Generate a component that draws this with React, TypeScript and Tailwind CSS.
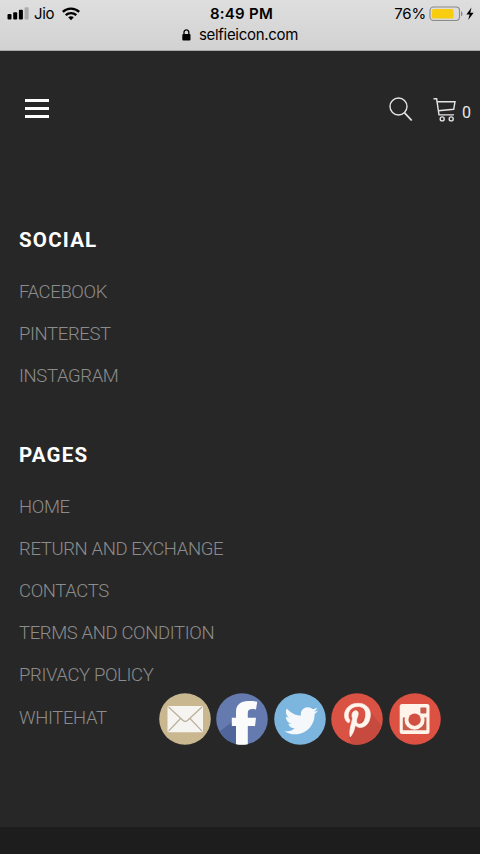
import React from "react";
import { FaPinterestP, FaTwitter } from "react-icons/fa";

const socialLinks = ["FACEBOOK", "PINTEREST", "INSTAGRAM"];
const pageLinks = ["HOME", "RETURN AND EXCHANGE", "CONTACTS", "TERMS AND CONDITION", "PRIVACY POLICY", "WHITEHAT"];

function StatusBar() {
  return (
    <header className="h-[51px] shrink-0 border-b border-[#aaa] bg-linear-to-b from-[#dedede] to-[#d2d2d2] font-['Inter','Liberation_Sans',sans-serif] text-black">
      <div className="grid h-[27px] grid-cols-3 items-center pl-[7px] pr-[5px]">
        {/* Signal */}
        <div className="flex items-center">
          <svg width="22" height="13" viewBox="0 0 22 13">
            <rect x="0.5" y="7" width="4" height="5.5" rx="1" />
            <rect x="6.2" y="5.2" width="4" height="7.3" rx="1" />
            <rect x="11.9" y="2.8" width="4" height="9.7" rx="1" />
            <rect x="17.6" y="0.2" width="4" height="12.3" rx="1" fill="#acacac" />
          </svg>
          <span className="ml-[5px] w-[21px] text-[15px] leading-[21px] tracking-[-0.3px]">Jio</span>
          <svg className="ml-[7px]" width="18" height="14" viewBox="0 0 18 14" fill="none" stroke="black" strokeWidth="2.3">
            <path d="M0.8 4.9C5.3 0.4 12.7 0.4 17.2 4.9" />
            <path d="M3.7 8.2C6.7 5.4 11.3 5.4 14.3 8.2" />
            <path d="M6.2 10.3C7.8 8.9 10.2 8.9 11.8 10.3L9 13.2Z" fill="black" stroke="none" />
          </svg>
        </div>
        <span className="pl-px text-center text-[15px] font-semibold leading-[21px] tracking-[0.25px]">8:49 PM</span>
        {/* Battery */}
        <div className="flex items-center justify-end">
          <span className="text-[15px] leading-[21px] tracking-[-0.2px]">76%</span>
          <svg className="ml-[3px]" width="46" height="16" viewBox="0 0 46 16">
            <rect x="1" y="1" width="29.5" height="13.5" rx="3.5" fill="none" stroke="#8a8a8a" strokeWidth="1.1" />
            <rect x="3" y="3" width="21.5" height="9.5" rx="1.6" fill="#f8cd10" />
            <path d="M32 5.2C34 5.8 34 9.7 32 10.3Z" fill="#8a8a8a" />
            <path d="M42.5 1.6L37.4 8.5H40.6L39.2 13.9L44.6 6.7H41.3Z" />
          </svg>
        </div>
      </div>
      <div className="flex h-[16px] items-center justify-center">
        <svg className="mr-2" width="9" height="12" viewBox="0 0 9 12">
          <rect x="0.3" y="5" width="8.2" height="6.4" rx="1" />
          <path d="M2 5.5V3.2C2 0.2 6.8 0.2 6.8 3.2V5.5" fill="none" stroke="black" strokeWidth="1.3" />
        </svg>
        <span className="text-[15px] leading-4 tracking-[-0.3px]">selfieicon.com</span>
      </div>
    </header>
  );
}

function NavBar() {
  return (
    <nav className="flex h-[60px] items-center justify-between pl-[25px] pr-[9px]">
      <button className="mb-px flex flex-col gap-[5px]" aria-label="Menu">
        <span className="h-[3px] w-6 bg-white" />
        <span className="h-[3px] w-6 bg-white" />
        <span className="h-[3px] w-6 bg-white" />
      </button>
      <div className="flex items-center">
        <svg width="24" height="26" viewBox="0 0 24 26" fill="none" stroke="#e4e4e4" strokeWidth="1.4">
          <circle cx="9.5" cy="10.5" r="8.5" />
          <path d="M15.6 16.8L22.7 24.5" strokeWidth="1.8" />
        </svg>
        <svg className="ml-5" width="24" height="26" viewBox="0 0 24 26" fill="none" stroke="#e4e4e4" strokeWidth="1.4">
          <path d="M0.5 2.8H3.6L6 18.9H21" />
          <path d="M4.1 5.7H22L20.7 13.3L5.2 14.8" />
          <circle cx="9.2" cy="22.9" r="2" />
          <circle cx="18.2" cy="22.9" r="2" />
        </svg>
        <span className="ml-[5px] w-[9px] pt-[7px] text-[16px] leading-5 text-[#e8e8e8]">0</span>
      </div>
    </nav>
  );
}

function LinkSection({ title, links }: { title: string; links: string[] }) {
  return (
    <section>
      <h2 className="text-[20.5px] font-bold leading-6 tracking-[1.2px] text-white">{title}</h2>
      <ul className="mt-[19px]">
        {links.map((link) => (
          <li key={link} className="h-[42.2px] text-[18.5px] font-light leading-[42.2px] tracking-[-0.37px] text-[#8c8c8c]">
            {link}
          </li>
        ))}
      </ul>
    </section>
  );
}

function ShareIcons() {
  return (
    <div className="absolute left-[158.5px] top-[693px] flex gap-[5.6px]">
      {/* Mail */}
      <svg width="52" height="52" viewBox="0 0 52 52">
        <circle cx="26" cy="26" r="25.8" fill="#c8b78f" />
        <rect x="8.5" y="13" width="35.5" height="26.2" rx="1.5" fill="#f5f4f1" />
        <path d="M9.5 14L23.8 27.3Q26.2 29.5 28.7 27.3L43 14M9.5 38.2L21.5 25.5M43 38.2L31 25.5" fill="none" stroke="#b9ae98" strokeWidth="1.2" />
      </svg>
      {/* Facebook */}
      <svg width="52" height="52" viewBox="0 0 52 52">
        <circle cx="26" cy="26" r="25.8" fill="#657bb0" />
        <path d="M16 29L3.5 38.5A25.8 25.8 0 0 0 20 51V33Z" fill="#50669b" />
        <path d="M20 51.2V33H15.8V24.7H20V19C20 11.5 25 8 32 8C36.5 8 39 8 41.2 8.8L40 16.5C34 15.4 31.8 16.6 31.8 20V24.7H40L39 33H31.8V51.2Q26 52.5 20 51.2Z" fill="#fbfbfc" />
      </svg>
      {/* Twitter */}
      <svg width="52" height="52" viewBox="0 0 52 52">
        <circle cx="26" cy="26" r="25.8" fill="#7cb6df" />
        <FaTwitter x="10.5" y="11" size={33.5} color="#f4f8fb" />
      </svg>
      {/* Pinterest */}
      <svg width="52" height="52" viewBox="0 0 52 52">
        <circle cx="26" cy="26" r="25.8" fill="#d95243" />
        <path d="M39 18L50.2 32.5A25.8 25.8 0 0 1 20.5 51.2L17.5 43.5Z" fill="#c64a3d" />
        <FaPinterestP x="9.2" y="9.7" size={34.5} color="#fff5ef" stroke="#fff5ef" strokeWidth="10" />
      </svg>
      {/* Instagram */}
      <svg width="52" height="52" viewBox="0 0 52 52">
        <circle cx="26" cy="26" r="25.8" fill="#dc5142" />
        <rect x="10.7" y="11" width="29.8" height="30" rx="2.5" fill="#fff3ea" />
        <path d="M13.8 24.5H17C15.2 32 20.5 35.2 25.6 35.2S36 32 34.2 24.5H37.4V37.3H13.8Z" fill="#c95b4d" />
        <circle cx="25.6" cy="26.7" r="10" fill="#fff3ea" />
        <circle cx="25.6" cy="26.7" r="6.2" fill="#d25143" />
        <rect x="31.4" y="14.4" width="6" height="6" rx="0.8" fill="#c95b4d" />
      </svg>
    </div>
  );
}

export default function App() {
  return (
    <div className="relative flex h-[854px] w-[480px] flex-col overflow-hidden bg-[#272727] font-['Roboto','Liberation_Sans',sans-serif]">
      <StatusBar />
      <div className="pt-7">
        <NavBar />
      </div>
      <main className="flex flex-1 flex-col gap-[45px] pl-[19px] pt-[89px]">
        <LinkSection title="SOCIAL" links={socialLinks} />
        <LinkSection title="PAGES" links={pageLinks} />
      </main>
      <footer className="h-[27px] shrink-0 bg-[#1d1d1d]" />
      <ShareIcons />
    </div>
  );
}
